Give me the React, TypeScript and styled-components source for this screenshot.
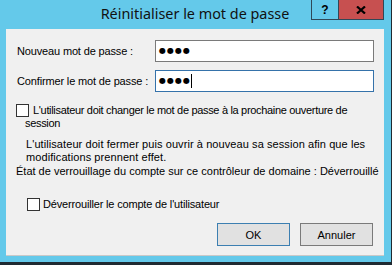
import React from "react";
import styled, { createGlobalStyle } from "styled-components";

const GlobalStyle = createGlobalStyle`
  html, body {
    margin: 0;
    padding: 0;
    background: #1f2a31;
  }
  body {
    width: 392px;
    height: 265px;
    overflow: hidden;
  }
`;

const Window = styled.div`
  width: 391px;
  height: 262px;
  box-sizing: border-box;
  padding: 0 7px 7px 6px;
  background: #64c9ea;
  display: flex;
  flex-direction: column;
  font-family: "Liberation Sans", Arial, sans-serif;
  font-size: 11px;
  color: #000;
`;

const TitleBar = styled.div`
  height: 29px;
  flex: none;
  display: grid;
  grid-template-columns: 1fr auto 1fr;
`;

const Title = styled.div`
  grid-column: 2;
  align-self: center;
  font-family: "Noto Sans", "Open Sans", sans-serif;
  font-size: 14.4px;
  line-height: 20px;
  color: #111;
  padding-bottom: 1px;
`;

const Controls = styled.div`
  grid-column: 3;
  justify-self: end;
  align-self: start;
  display: flex;
`;

const CaptionButton = styled.div<{ $close?: boolean }>`
  width: ${({ $close }) => ($close ? "45px" : "28px")};
  height: 20px;
  box-sizing: border-box;
  border: 1px solid #2f4858;
  border-top: none;
  border-left: ${({ $close }) => ($close ? "none" : "1px solid #2f4858")};
  background: ${({ $close }) => ($close ? "#c75050" : "transparent")};
  display: flex;
  align-items: center;
  justify-content: center;
  font-family: "Liberation Sans", Arial, sans-serif;
  font-weight: bold;
  font-size: 12px;
  color: #000;
`;

const Client = styled.div`
  flex: 1;
  background: #f0f0f0;
  border-bottom: 1px solid #c9c9c9;
  display: flex;
  flex-direction: column;
  padding: 11px 11px 9px 10px;
`;

const FieldGrid = styled.div`
  display: grid;
  grid-template-columns: 138px 219px;
  row-gap: 8px;
  align-items: center;
  padding-left: 1px;
`;

const Label = styled.label`
  white-space: nowrap;
  letter-spacing: -0.15px;
`;

const Field = styled.div<{ $focused?: boolean }>`
  height: 22px;
  box-sizing: border-box;
  border: 1px solid ${({ $focused }) => ($focused ? "#3572aa" : "#7a7a7a")};
  background: #fff;
  display: flex;
  align-items: center;
  padding-left: 3px;
`;

const Dots = styled.span`
  font-family: "DejaVu Sans", sans-serif;
  font-size: 8px;
  letter-spacing: 1px;
  line-height: 1;
`;

const Caret = styled.span`
  width: 1px;
  height: 14px;
  background: #000;
`;

const Box = styled.span`
  display: inline-block;
  width: 13px;
  height: 13px;
  box-sizing: border-box;
  border: 1px solid #333;
  background: #fff;
  vertical-align: top;
  text-indent: 0;
  flex: none;
`;

const CheckPara = styled.div`
  margin-top: 12px;
  padding-left: 9px;
  text-indent: -9px;
  line-height: 13px;
  letter-spacing: -0.32px;

  ${Box} {
    margin-right: 4px;
  }
`;

const Note = styled.div`
  margin-top: 8px;
  padding-left: 10px;
  line-height: 13px;
  letter-spacing: 0.08px;
  white-space: nowrap;
`;

const Status = styled.div`
  margin-top: 1px;
  line-height: 13px;
  white-space: nowrap;
`;

const CheckRow = styled.div`
  margin-top: 20px;
  padding-left: 11px;
  display: flex;
  align-items: center;
  gap: 3px;
  line-height: 13px;
  letter-spacing: -0.17px;
`;

const ButtonRow = styled.div`
  margin-top: 12px;
  display: flex;
  justify-content: flex-end;
  gap: 10px;
`;

const Button = styled.button<{ $default?: boolean }>`
  width: 73px;
  height: 23px;
  box-sizing: border-box;
  border: 1px solid ${({ $default }) => ($default ? "#3c7fb1" : "#7a7a7a")};
  background: #e1e1e1;
  font-family: "Liberation Sans", Arial, sans-serif;
  font-size: 11px;
  color: #000;
  padding: 0;
`;

function CloseGlyph() {
  return (
    <svg width="10" height="8" viewBox="0 0 10 8">
      <path d="M1 0.5 L9 7.5 M9 0.5 L1 7.5" stroke="#000" strokeWidth="2.2" />
    </svg>
  );
}

export default function App() {
  return (
    <>
      <GlobalStyle />
      <Window>
        <TitleBar>
          <Title>Réinitialiser le mot de passe</Title>
          <Controls>
            <CaptionButton>?</CaptionButton>
            <CaptionButton $close>
              <CloseGlyph />
            </CaptionButton>
          </Controls>
        </TitleBar>
        <Client>
          <FieldGrid>
            <Label>Nouveau mot de passe :</Label>
            <Field>
              <Dots>●●●●</Dots>
            </Field>
            <Label>Confirmer le mot de passe :</Label>
            <Field $focused>
              <Dots>●●●●</Dots>
              <Caret />
            </Field>
          </FieldGrid>
          <CheckPara>
            <Box />
            L'utilisateur doit changer le mot de passe à la prochaine ouverture de session
          </CheckPara>
          <Note>
            L'utilisateur doit fermer puis ouvrir à nouveau sa session afin que les
            <br />
            modifications prennent effet.
          </Note>
          <Status>
            État de verrouillage du compte sur ce contrôleur de domaine : Déverrouillé
          </Status>
          <CheckRow>
            <Box />
            Déverrouiller le compte de l'utilisateur
          </CheckRow>
          <ButtonRow>
            <Button $default>OK</Button>
            <Button>Annuler</Button>
          </ButtonRow>
        </Client>
      </Window>
    </>
  );
}
